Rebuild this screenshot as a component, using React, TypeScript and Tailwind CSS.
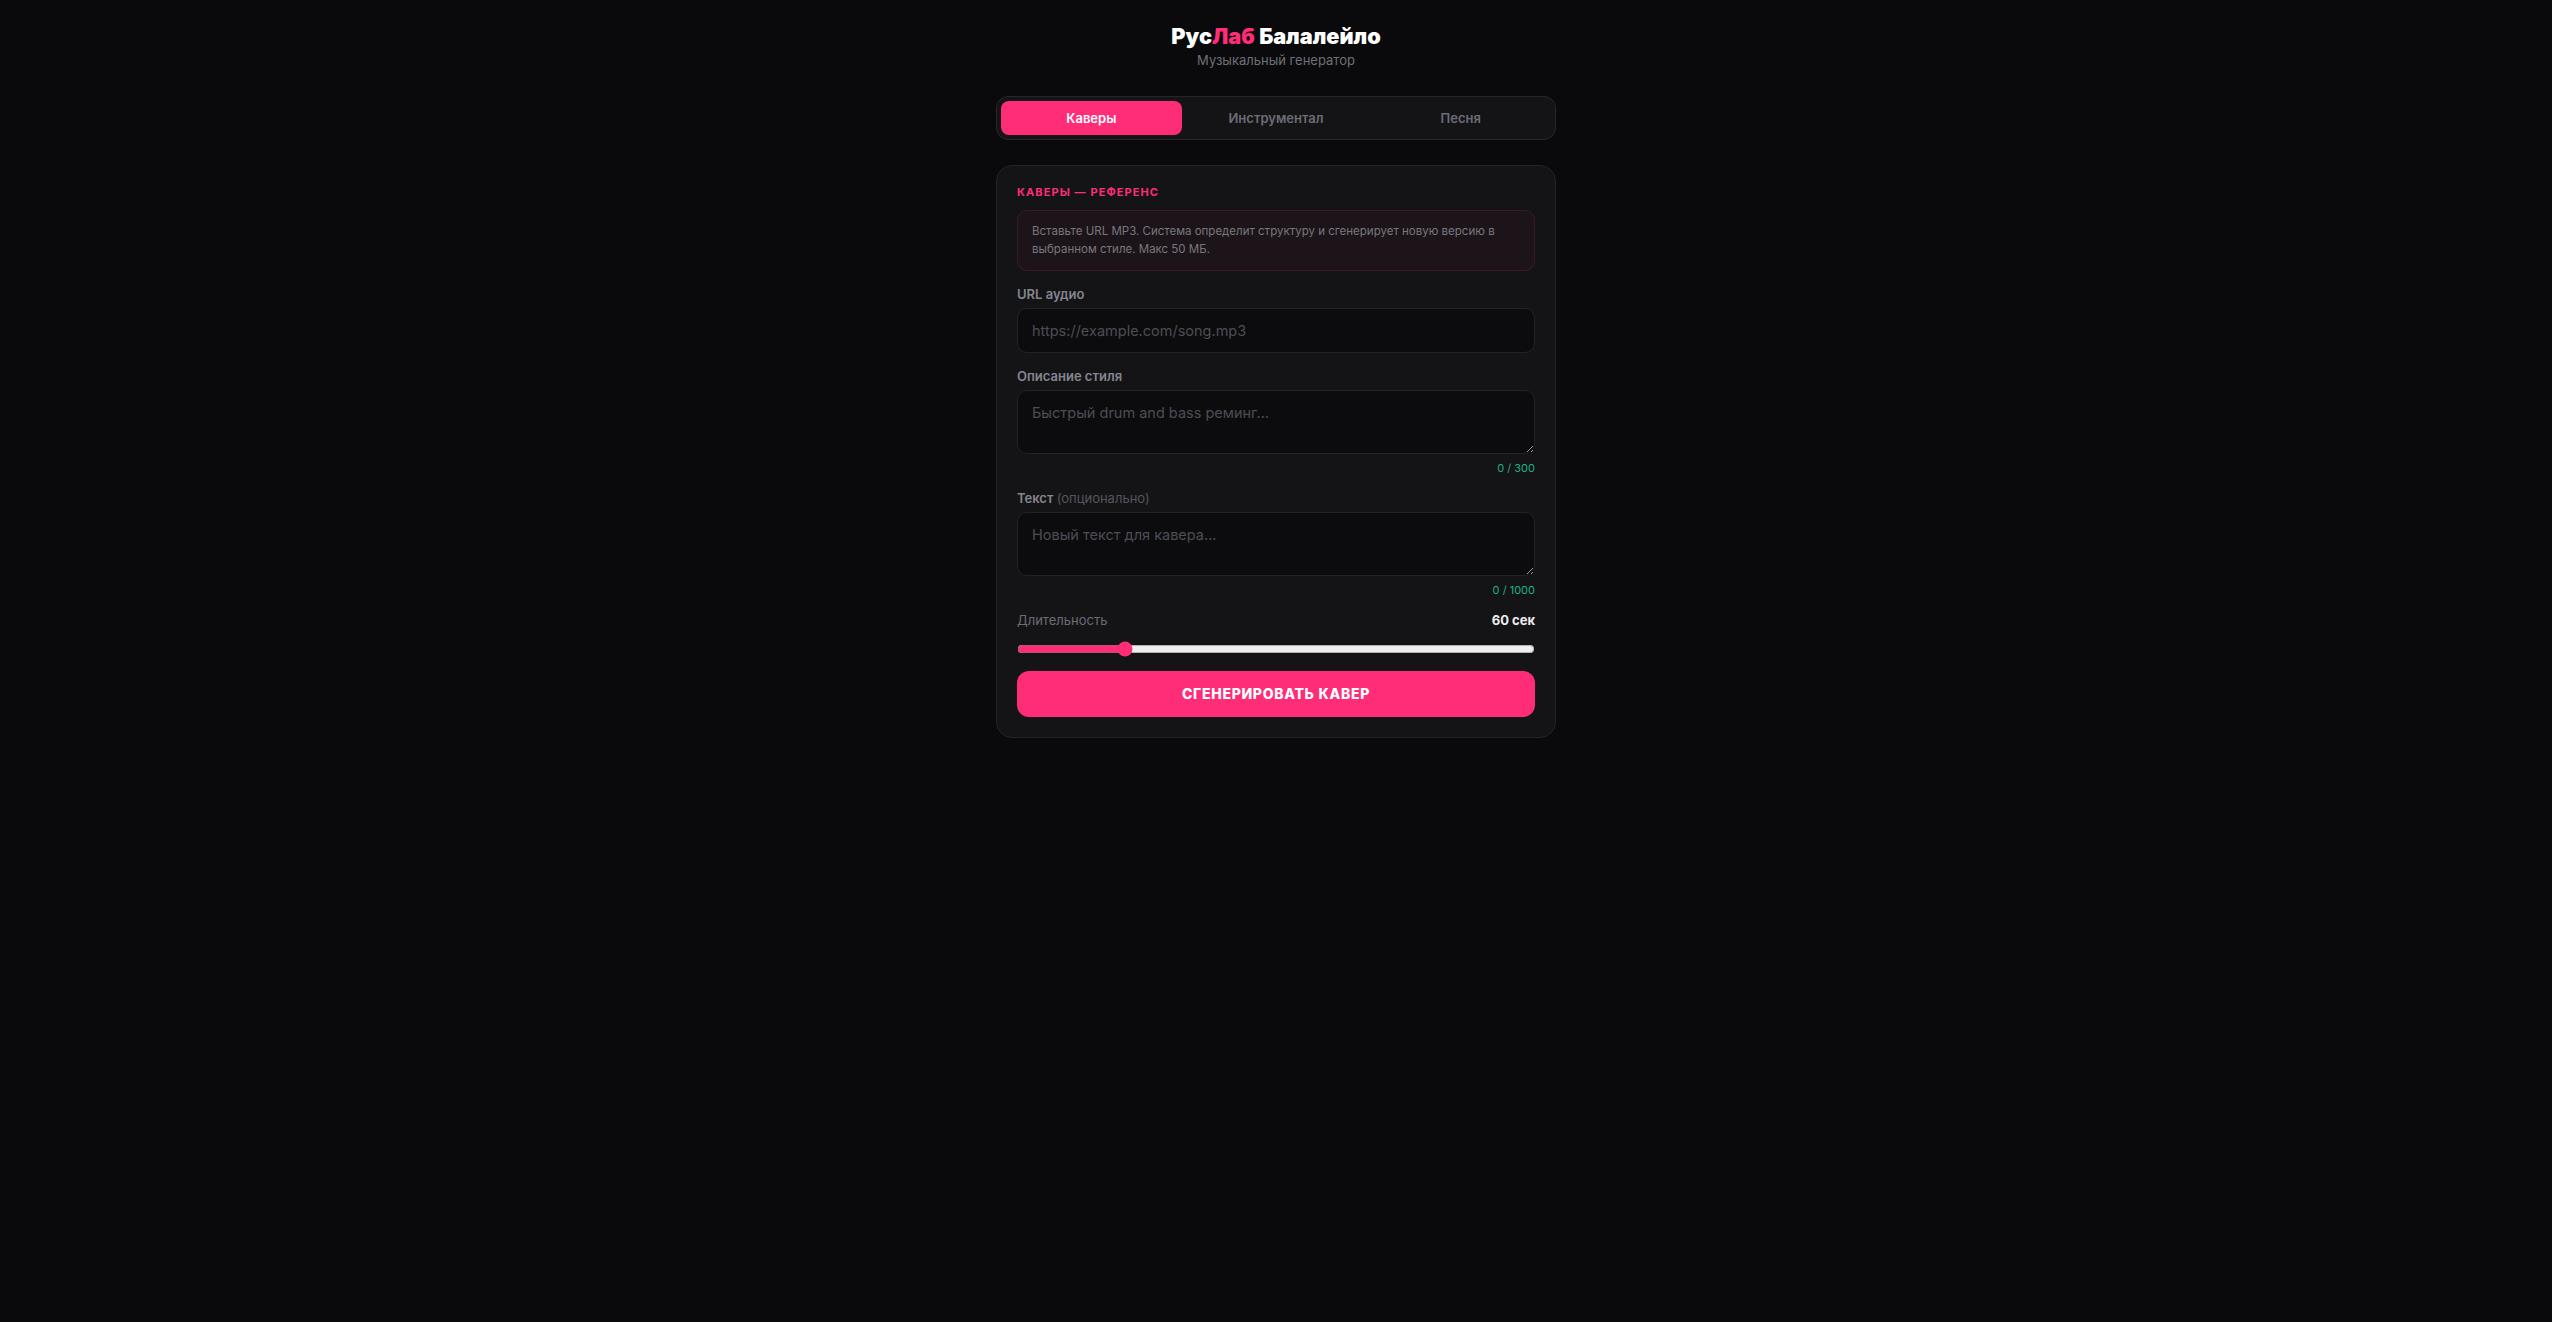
import React, { useState } from 'react';

const tabs = ['Каверы', 'Инструментал', 'Песня'];

const App = () => {
  const [tab, setTab] = useState(0);
  const [url, setUrl] = useState('');
  const [style, setStyle] = useState('');
  const [lyrics, setLyrics] = useState('');
  const [duration, setDuration] = useState(60);

  return (
    <div className="min-h-screen bg-[#0a0a0c] font-['Inter','Noto_Sans',sans-serif] text-white">
      <div className="mx-auto w-[560px] pt-[22px] pb-10">
        {/* Header */}
        <div className="mb-[26px] text-center">
          <h1 className="text-[21.7px] font-black leading-7">
            Рус<span className="text-[#ff2d78]">Лаб</span> Балалейло
          </h1>
          <p className="text-[13px] leading-5 text-[#6f6f78]">Музыкальный генератор</p>
        </div>

        {/* Tabs */}
        <div className="flex gap-1 rounded-xl border border-[#26262b] bg-[#141417] p-1">
          {tabs.map((t, i) => (
            <button
              key={t}
              onClick={() => setTab(i)}
              className={
                i === tab
                  ? 'flex-1 rounded-lg bg-[#ff2d78] py-2 text-[13px] font-semibold leading-[18px] text-white'
                  : 'flex-1 rounded-lg py-2 text-[13px] font-semibold leading-[18px] text-[#6c6c75]'
              }
            >
              {t}
            </button>
          ))}
        </div>

        {/* Card */}
        <div className="mt-[25px] rounded-2xl border border-[#232328] bg-[#141417] p-5">
          <div className="mb-3 text-[11px] font-bold leading-[12px] tracking-[0.1em] text-[#ff2d78]">
            КАВЕРЫ — РЕФЕРЕНС
          </div>

          <div className="mb-[15px] rounded-[10px] border border-[#3a1a28] bg-[#1c1419] px-3.5 py-3 text-[11.5px] leading-[17.5px] text-[#7a767d]">
            Вставьте URL MP3. Система определит структуру и сгенерирует новую версию в выбранном стиле. Макс 50 МБ.
          </div>

          <div className="mb-[15px]">
            <label className="mb-1.5 block text-[13px] font-semibold leading-4 text-[#85858e]">URL аудио</label>
            <input
              type="text"
              value={url}
              onChange={(e) => setUrl(e.target.value)}
              placeholder="https://example.com/song.mp3"
              className="block h-[45px] w-full rounded-[10px] border border-[#222227] bg-[#0c0c0e] px-3.5 text-[14.5px] text-white outline-none placeholder:text-[#4d4d55]"
            />
          </div>

          <div className="mb-[15px]">
            <label className="mb-1.5 block text-[13px] font-semibold leading-4 text-[#85858e]">Описание стиля</label>
            <textarea
              rows={2}
              value={style}
              maxLength={300}
              onChange={(e) => setStyle(e.target.value)}
              placeholder="Быстрый drum and bass реминг..."
              className="block h-[64px] w-full rounded-[10px] border border-[#222227] bg-[#0c0c0e] px-3.5 py-3 text-[14.5px] leading-5 text-white outline-none placeholder:text-[#4d4d55]"
            />
            <div className="mt-2 text-right text-[11px] leading-[13px] text-[#1fb083]">{style.length} / 300</div>
          </div>

          <div className="mb-[15px]">
            <label className="mb-1.5 block text-[13px] font-semibold leading-4 text-[#85858e]">
              Текст <span className="font-normal text-[#55555d]">(опционально)</span>
            </label>
            <textarea
              rows={2}
              value={lyrics}
              maxLength={1000}
              onChange={(e) => setLyrics(e.target.value)}
              placeholder="Новый текст для кавера..."
              className="block h-[64px] w-full rounded-[10px] border border-[#222227] bg-[#0c0c0e] px-3.5 py-3 text-[14.5px] leading-5 text-white outline-none placeholder:text-[#4d4d55]"
            />
            <div className="mt-2 text-right text-[11px] leading-[13px] text-[#1fb083]">{lyrics.length} / 1000</div>
          </div>

          <div className="mb-[13px] flex items-center justify-between text-[13px] leading-4">
            <span className="text-[#6c6c75]">Длительность</span>
            <span className="font-bold text-[#ececef]">{duration} сек</span>
          </div>
          <input
            type="range"
            min={30}
            max={180}
            step={5}
            value={duration}
            onChange={(e) => setDuration(Number(e.target.value))}
            className="block h-4 w-full accent-[#ff2d78]"
          />

          <button className="mt-[14px] h-[46px] w-full rounded-xl bg-[#ff2d78] text-sm font-extrabold uppercase tracking-wider text-white">
            Сгенерировать кавер
          </button>
        </div>
      </div>
    </div>
  );
};

export default App;
